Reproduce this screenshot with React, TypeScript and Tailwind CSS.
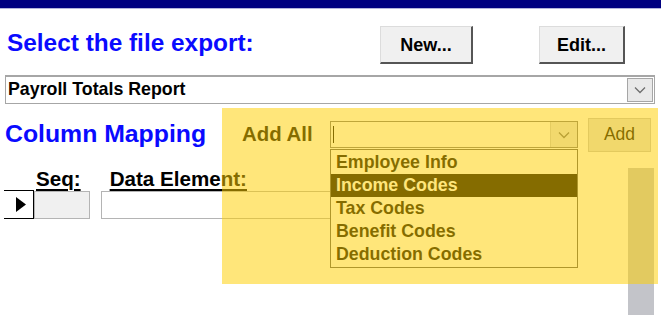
import { JSX } from 'react'

function Chevron(): JSX.Element {
  return (
    <svg width="12" height="8" viewBox="0 0 12 8" className="block">
      <polyline points="1,1.5 6,6.5 11,1.5" fill="none" stroke="#6e6e6e" strokeWidth="1.3" />
    </svg>
  )
}

function RaisedButton({ label, width }: { label: string; width: string }): JSX.Element {
  return (
    <button
      type="button"
      className={`${width} h-[38px] bg-[#f0f0f0] border-t border-l border-[#dcdcdc] border-r-2 border-b-2 border-r-[#555] border-b-[#555] text-[18px] font-bold text-black leading-none`}
    >
      {label}
    </button>
  )
}

const listItems = ['Employee Info', 'Income Codes', 'Tax Codes', 'Benefit Codes', 'Deduction Codes']

export default function App(): JSX.Element {
  return (
    <div className="relative w-[661px] h-[316px] overflow-hidden bg-white font-['Liberation_Sans',Arial,sans-serif]">
      {/* title bar strip */}
      <div className="h-[9px] bg-[#000080] border-b border-[#b4b4dc]" />

      {/* header row */}
      <div className="flex items-start pt-[17px]">
        <div className="w-[380px] pl-[7px] pt-[5px]">
          <h1 className="text-[24.4px] leading-6 font-bold text-[#0a0aff]">Select the file export:</h1>
        </div>
        <RaisedButton label="New..." width="w-[93px]" />
        <div className="ml-[66px]">
          <RaisedButton label="Edit..." width="w-[86px]" />
        </div>
      </div>

      {/* export combo */}
      <div className="ml-[5px] mt-[11px] w-[650px] h-[29px] flex items-center border border-[#a6a6a6] border-t-2 bg-white">
        <span className="flex-1 pl-[2px] text-[17.8px] leading-none font-bold text-black">Payroll Totals Report</span>
        <div className="w-[26px] h-[24px] mr-[1px] flex items-center justify-center bg-[#e9e9e9] border border-[#a6a6a6]">
          <Chevron />
        </div>
      </div>

      {/* column mapping row */}
      <div className="flex items-start h-[64px]">
        <div className="w-[242px] pl-[5px] pt-[18px]">
          <h2 className="text-[24.8px] leading-6 font-bold text-[#0a0aff]">Column Mapping</h2>
        </div>
        <div className="w-[88px] pt-[20px]">
          <span className="text-[20.4px] leading-5 font-bold text-black">Add All</span>
        </div>
        <div className="relative w-[248px] mt-[17px]">
          <div className="h-[27px] flex items-center border border-[#7a7a7a] bg-white">
            <div className="ml-[2px] w-px h-[17px] bg-black" />
            <div className="flex-1" />
            <div className="w-[27px] h-[25px] flex items-center justify-center bg-[#e4e4e4] border-l border-[#c8c8c8]">
              <Chevron />
            </div>
          </div>
          <ul className="absolute left-0 top-[28px] w-full z-10 bg-white border border-[#5a5a5a] pt-px pb-px">
            {listItems.map((item) => (
              <li
                key={item}
                className={`h-[23px] flex items-center pl-[5px] text-[17.8px] leading-none font-bold ${
                  item === 'Income Codes' ? 'bg-black text-white' : 'text-black'
                }`}
              >
                {item}
              </li>
            ))}
          </ul>
        </div>
        <button
          type="button"
          className="ml-[10px] mt-[14px] w-[63px] h-[34px] bg-[#e2e2e2] border border-[#c4c4c4] text-[17.5px] leading-none text-black"
        >
          Add
        </button>
      </div>

      {/* mapping grid */}
      <div className="flex h-[147px]">
        <div className="w-[628px]">
          <div className="flex h-[22px] pt-px text-[20.6px] leading-5 font-bold text-black">
            <span className="ml-[36px] underline decoration-2 underline-offset-[3px]">Seq:</span>
            <span className="ml-[29px] underline decoration-2 underline-offset-[3px]">Data Element:</span>
          </div>
          <div className="flex items-stretch h-[29px]">
            <div className="ml-[4px] w-[30px] flex items-center justify-end pr-[7px] border-t border-b border-r border-black">
              <svg width="10" height="15" viewBox="0 0 10 15" className="block">
                <polygon points="0,0 10,7.5 0,15" fill="#000" />
              </svg>
            </div>
            <div className="w-[56px] mt-px bg-[#f0f0f0] border border-[#b4b4b4]" />
            <div className="ml-[11px] w-[400px] mt-px bg-white border border-[#b4b4b4]" />
          </div>
        </div>
        <div className="w-[26px] bg-[#c3c4c9]" />
      </div>

      {/* highlight overlay */}
      <div className="pointer-events-none absolute left-[222px] top-[108px] w-[436px] h-[176px] z-20 bg-[rgba(255,208,0,0.52)]" />
    </div>
  )
}
